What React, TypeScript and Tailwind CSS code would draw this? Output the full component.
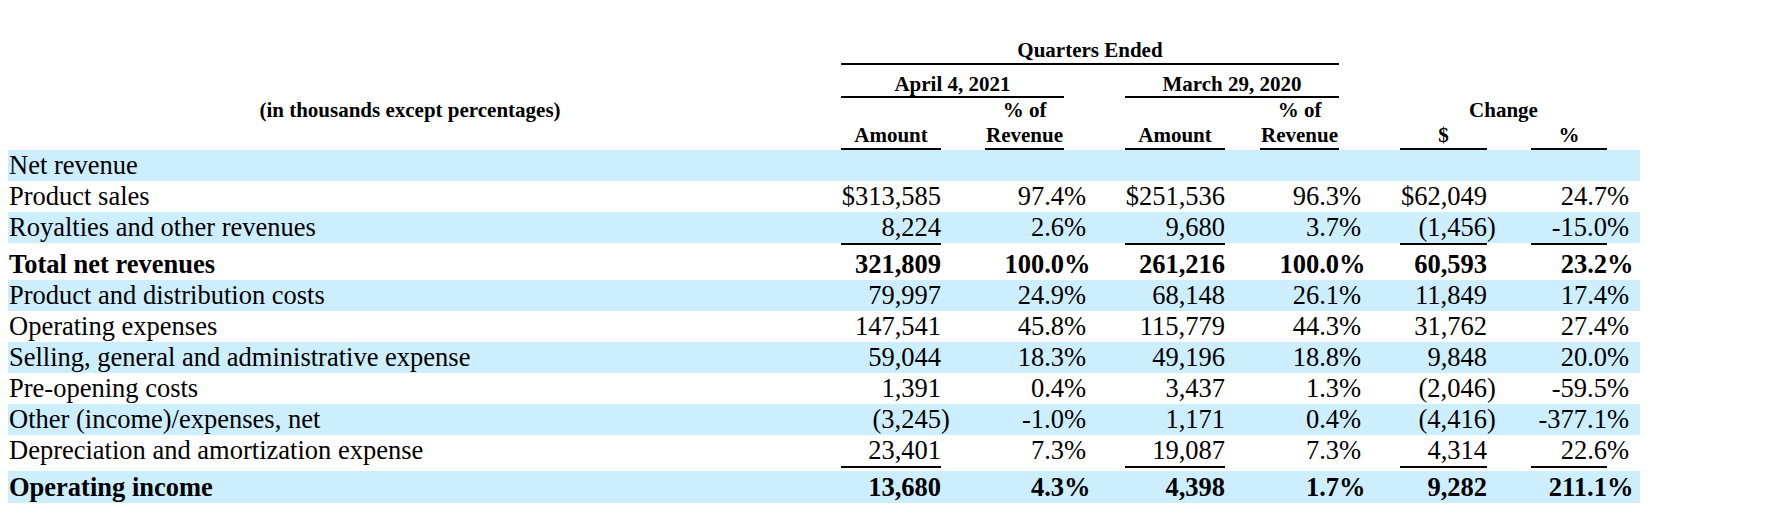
import React from 'react';

// 13 tracks: label | amt | ) | pct | % | amt | ) | pct | % | chg $ | ) | chg % | %
const cols =
  'grid w-[1632px] grid-cols-[833px_100px_44px_79px_61px_100px_35px_79px_61px_87px_44px_76px_33px]';

type Line = {
  label: string;
  vals?: string[];
  bold?: boolean;
  blue?: boolean;
  over?: boolean;
  under?: boolean;
  tall?: boolean;
};

const lines: Line[] = [
  { label: 'Net revenue', blue: true },
  { label: 'Product sales', vals: ['$313,585', '97.4', '$251,536', '96.3', '$62,049', '24.7'] },
  { label: 'Royalties and other revenues', vals: ['8,224', '2.6', '9,680', '3.7', '(1,456)', '-15.0'], blue: true },
  { label: 'Total net revenues', vals: ['321,809', '100.0', '261,216', '100.0', '60,593', '23.2'], bold: true, over: true },
  { label: 'Product and distribution costs', vals: ['79,997', '24.9', '68,148', '26.1', '11,849', '17.4'], blue: true },
  { label: 'Operating expenses', vals: ['147,541', '45.8', '115,779', '44.3', '31,762', '27.4'] },
  { label: 'Selling, general and administrative expense', vals: ['59,044', '18.3', '49,196', '18.8', '9,848', '20.0'], blue: true },
  { label: 'Pre-opening costs', vals: ['1,391', '0.4', '3,437', '1.3', '(2,046)', '-59.5'] },
  { label: 'Other (income)/expenses, net', vals: ['(3,245)', '-1.0', '1,171', '0.4', '(4,416)', '-377.1'], blue: true },
  { label: 'Depreciation and amortization expense', vals: ['23,401', '7.3', '19,087', '7.3', '4,314', '22.6'], under: true },
  { label: 'Operating income', vals: ['13,680', '4.3', '4,398', '1.7', '9,282', '211.1'], bold: true, blue: true, tall: true },
];

// columns that carry a rule above totals
const ruled = [0, 2, 4, 5];

function DataRow({ line }: { line: Line }) {
  const vals = line.vals ?? ['', '', '', '', '', ''];
  const pad = line.over ? 'pt-[6px]' : '';
  return (
    <div
      className={`${cols} ${line.blue ? 'bg-[#cceeff]' : ''} ${line.bold ? 'font-bold' : ''} ${
        line.tall ? 'leading-[32px]' : 'leading-[31px]'
      } ${line.under ? 'pb-[3px]' : ''}`}
    >
      <div className={`whitespace-nowrap pl-px ${pad}`}>{line.label}</div>
      {vals.map((v, i) => {
        const pct = i % 2 === 1 || i === 5;
        let main = v;
        let suffix = '';
        if (v && pct) suffix = '%';
        else if (v.endsWith(')')) {
          main = v.slice(0, -1);
          suffix = ')';
        }
        const rule = ruled.includes(i);
        let cellCls = pad;
        if (rule && line.over) cellCls = 'border-t-2 border-black pt-[4px]';
        if (rule && line.under) cellCls = 'border-b-2 border-black';
        return (
          <React.Fragment key={i}>
            <div className={`whitespace-nowrap text-right ${cellCls}`}>{main}</div>
            <div className={`whitespace-nowrap text-left ${pad}`}>{suffix}</div>
          </React.Fragment>
        );
      })}
    </div>
  );
}

export default function App() {
  return (
    <div className="h-[514px] w-[1786px] overflow-hidden bg-white pl-2 pt-[38px] font-['Liberation_Serif',serif] text-black">
      {/* header */}
      <div className="text-[21px] font-bold">
        <div className={`${cols} leading-[25px]`}>
          <div className="col-span-7 col-start-2 border-b-2 border-black text-center">Quarters Ended</div>
        </div>
        <div className={`${cols} pt-[7px] leading-[24px]`}>
          <div className="col-span-3 col-start-2 border-b-2 border-black text-center">April 4, 2021</div>
          <div className="col-span-3 col-start-6 border-b-2 border-black text-center">March 29, 2020</div>
        </div>
        <div className={`${cols} leading-[25px]`}>
          <div className="col-start-1 whitespace-nowrap pr-[29px] text-center">(in thousands except percentages)</div>
          <div className="col-start-4 text-center">% of</div>
          <div className="col-start-8 text-center">% of</div>
          <div className="col-span-3 col-start-10 text-center">Change</div>
        </div>
        <div className={`${cols} leading-[25px]`}>
          <div className="col-start-2 border-b-2 border-black text-center">Amount</div>
          <div className="col-start-4 border-b-2 border-black text-center">Revenue</div>
          <div className="col-start-6 border-b-2 border-black text-center">Amount</div>
          <div className="col-start-8 border-b-2 border-black text-center">Revenue</div>
          <div className="col-start-10 border-b-2 border-black text-center">$</div>
          <div className="col-start-12 border-b-2 border-black text-center">%</div>
        </div>
      </div>

      {/* body */}
      <div className="text-[26.5px]">
        {lines.map((l) => (
          <DataRow key={l.label} line={l} />
        ))}
      </div>
    </div>
  );
}
